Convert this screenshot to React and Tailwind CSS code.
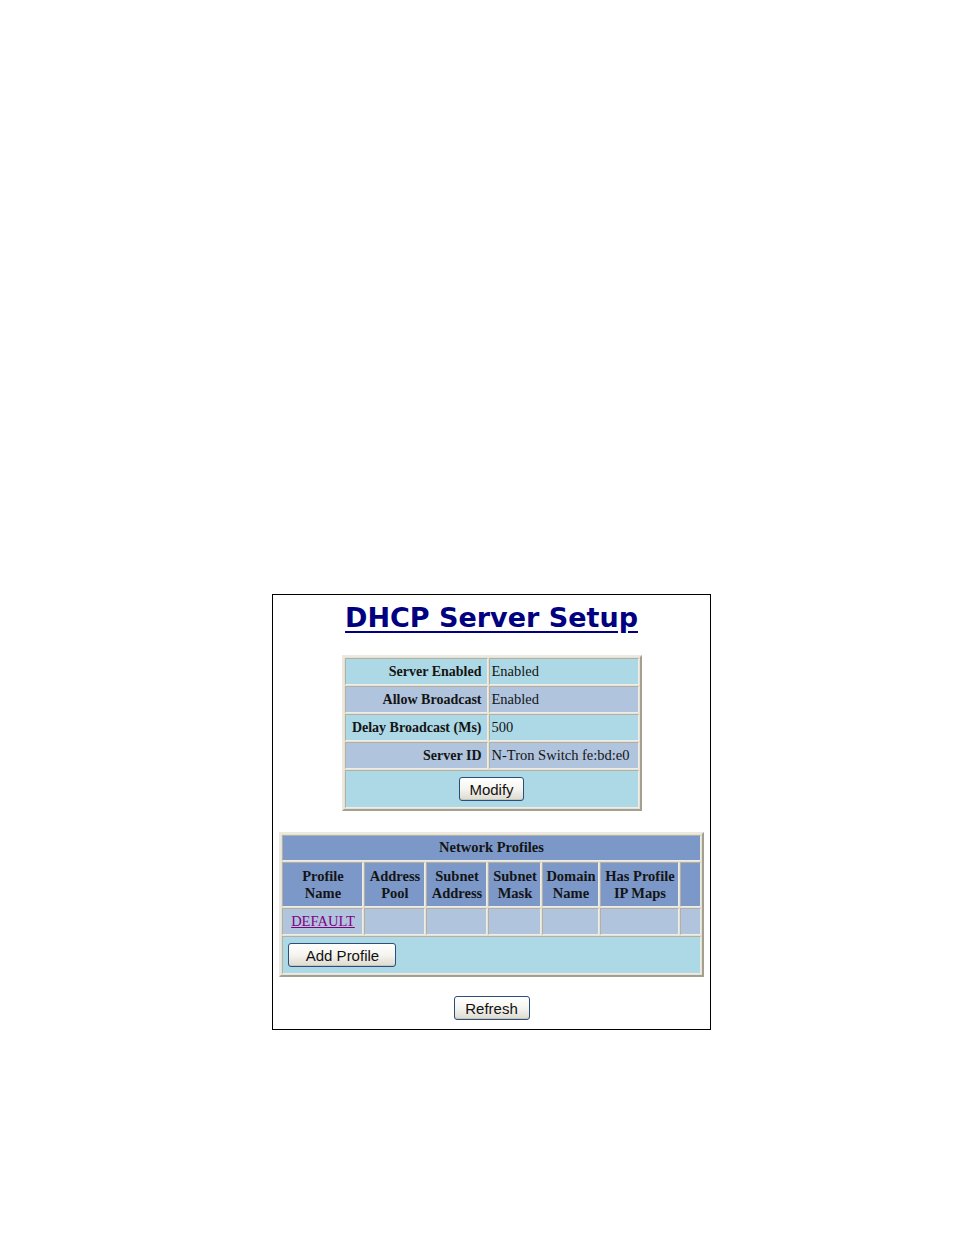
import React from "react";

const serif = { fontFamily: '"Liberation Serif", "Times New Roman", serif' };

function Btn({ children, w }) {
  return (
    <button
      className={`h-[24px] ${w} rounded-[3px] border border-[#2a4f7a] bg-gradient-to-b from-[#ffffff] via-[#f5f4ef] to-[#dcdad0] text-[15px] leading-none text-[#111] shadow-[inset_0_-1px_0_#c9c6b8] align-middle`}
      style={{ fontFamily: '"Liberation Sans", Arial, sans-serif' }}
    >
      {children}
    </button>
  );
}

const cell = "border border-t-[#b3b0a2] border-l-[#b3b0a2] border-b-[#efede5] border-r-[#efede5]";
const tbl =
  "border-separate border-spacing-[1px] bg-[#e4e1d5] border-2 border-t-[#eceae0] border-l-[#eceae0] border-b-[#a3a092] border-r-[#a3a092]";

export default function App() {
  return (
    <div className="w-[954px] min-h-[1235px] bg-white pt-[594px] pl-[272px]">
      <div className="w-[439px] h-[436px] border border-black flex flex-col items-center">
        <div
          className="mt-[8px] text-[27px] font-bold text-[#000080] underline overline underline-offset-[4px] leading-[29px]"
          style={{ fontFamily: '"DejaVu Sans", Verdana, sans-serif' }}
        >
          DHCP Server Setup
        </div>

        <table className={`mt-[23px] w-[300px] table-fixed ${tbl} text-[14.5px] text-[#141414]`} style={serif}>
          <colgroup>
            <col className="w-[143px]" />
            <col className="w-[150px]" />
          </colgroup>
          <tbody>
            {[
              ["Server Enabled", "Enabled", "bg-[#add8e6]"],
              ["Allow Broadcast", "Enabled", "bg-[#b0c4de]"],
              ["Delay Broadcast (Ms)", "500", "bg-[#add8e6]"],
              ["Server ID", "N-Tron Switch fe:bd:e0", "bg-[#b0c4de]"],
            ].map(([k, v, bg]) => (
              <tr key={k}>
                <td className={`${cell} ${bg} h-[27px] p-0 pr-[5px] text-right font-bold text-[14px] whitespace-nowrap`}>{k}</td>
                <td className={`${cell} ${bg} h-[27px] p-0 pl-[2px] text-left whitespace-nowrap`}>{v}</td>
              </tr>
            ))}
            <tr>
              <td colSpan={2} className={`${cell} bg-[#add8e6] h-[38px] text-center align-middle`}>
                <Btn w="w-[65px]">Modify</Btn>
              </td>
            </tr>
          </tbody>
        </table>

        <table className={`mt-[21px] w-[424px] table-fixed ${tbl} text-[14.5px] text-[#141414]`} style={serif}>
          <colgroup>
            <col className="w-[81px]" />
            <col className="w-[61px]" />
            <col className="w-[61px]" />
            <col className="w-[53px]" />
            <col className="w-[57px]" />
            <col className="w-[79px]" />
            <col className="w-[20px]" />
          </colgroup>
          <tbody>
            <tr>
              <td colSpan={7} className={`${cell} bg-[#7b98c9] h-[26px] text-center font-bold`}>Network Profiles</td>
            </tr>
            <tr className="leading-[17px] font-bold text-center">
              <td className={`${cell} bg-[#7b98c9] h-[45px]`}>Profile<br />Name</td>
              <td className={`${cell} bg-[#7b98c9] h-[45px]`}>Address<br />Pool</td>
              <td className={`${cell} bg-[#7b98c9] h-[45px]`}>Subnet<br />Address</td>
              <td className={`${cell} bg-[#7b98c9] h-[45px]`}>Subnet<br />Mask</td>
              <td className={`${cell} bg-[#7b98c9] h-[45px]`}>Domain<br />Name</td>
              <td className={`${cell} bg-[#7b98c9] h-[45px] whitespace-nowrap`}>Has Profile<br />IP Maps</td>
              <td className={`${cell} bg-[#7b98c9] h-[45px]`}></td>
            </tr>
            <tr>
              <td className={`${cell} bg-[#b0c4de] h-[27px] text-center`}>
                <a href="#" className="text-[#800080] underline">DEFAULT</a>
              </td>
              <td className={`${cell} bg-[#b0c4de] h-[27px]`}></td>
              <td className={`${cell} bg-[#b0c4de] h-[27px]`}></td>
              <td className={`${cell} bg-[#b0c4de] h-[27px]`}></td>
              <td className={`${cell} bg-[#b0c4de] h-[27px]`}></td>
              <td className={`${cell} bg-[#b0c4de] h-[27px]`}></td>
              <td className={`${cell} bg-[#b0c4de] h-[27px]`}></td>
            </tr>
            <tr>
              <td colSpan={7} className={`${cell} bg-[#add8e6] h-[38px] pl-[5px] align-middle`}>
                <Btn w="w-[108px]">Add Profile</Btn>
              </td>
            </tr>
          </tbody>
        </table>

        <div className="mt-[19px] flex">
          <Btn w="w-[76px]">Refresh</Btn>
        </div>
      </div>
    </div>
  );
}
